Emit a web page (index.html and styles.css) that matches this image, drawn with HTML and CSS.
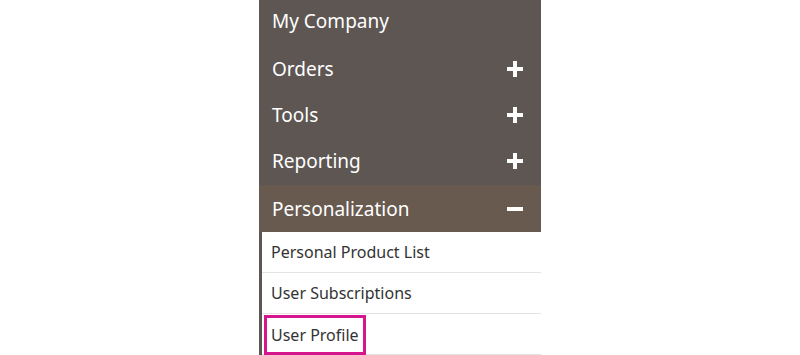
FILE: index.html
```html
<!DOCTYPE html>
<html lang="en">
<head>
    <meta charset="UTF-8">
    <title>Account Menu</title>
    <link rel="stylesheet" href="styles.css">
</head>
<body>
    <div class="account-nav">
        <div class="nav-title first">My Company</div>
        <div class="nav-title">Orders <span class="toggle plus"></span></div>
        <div class="nav-title">Tools <span class="toggle plus"></span></div>
        <div class="nav-title">Reporting <span class="toggle plus"></span></div>
        <div class="nav-title open">Personalization <span class="toggle"></span></div>
        <ul class="sub-menu">
            <li><a href="#">Personal Product List</a></li>
            <li><a href="#">User Subscriptions</a></li>
            <li><a href="#" class="highlight">User Profile</a></li>
        </ul>
    </div>
</body>
</html>
```

FILE: styles.css
```css
body {
    margin: 0;
    font-family: "Noto Sans", sans-serif;
    background-color: white;
}
.account-nav {
    width: 282px;
    margin: 0 auto;
}
.nav-title {
    display: flex;
    align-items: center;
    justify-content: space-between;
    height: 43px;
    padding: 0 18px 3px 13px;
    background-color: #5e5652;
    color: white;
    font-size: 19px;
}
.nav-title.first {
    height: 41px;
    padding-bottom: 6px;
}
.nav-title.open {
    height: 47px;
    padding-bottom: 0;
    background-color: #695a50;
}
.toggle {
    position: relative;
    width: 16px;
    height: 16px;
}
.toggle::before,
.toggle.plus::after {
    content: "";
    position: absolute;
    background-color: white;
}
.toggle::before {
    left: 0;
    top: 6px;
    width: 16px;
    height: 4px;
}
.toggle.plus::after {
    left: 6px;
    top: 0;
    width: 4px;
    height: 16px;
}
.sub-menu {
    list-style: none;
    margin: 0;
    padding: 0;
    border-left: 3px solid #5e5652;
}
.sub-menu li {
    height: 40px;
    display: flex;
    align-items: center;
    border-bottom: 1px solid #e3e3e3;
}
.sub-menu a {
    color: #333;
    text-decoration: none;
    font-size: 16px;
    padding-left: 9px;
}
.sub-menu a.highlight {
    display: flex;
    align-items: center;
    align-self: flex-end;
    height: 34px;
    margin-left: 2px;
    padding: 0 4px;
    border: 3px solid #d6168c;
    margin-bottom: -1px;
}
```
